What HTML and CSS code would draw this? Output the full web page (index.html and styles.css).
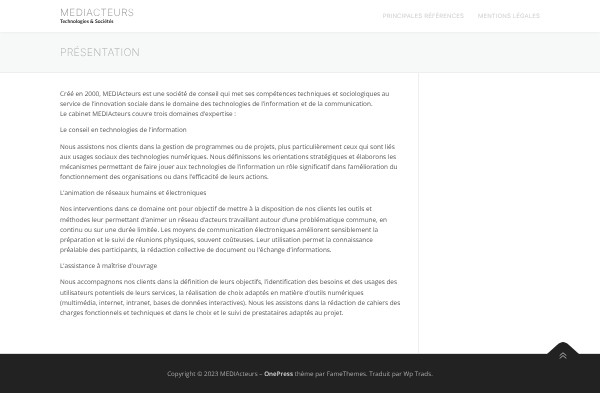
FILE: index.html
```html
<!DOCTYPE html>
<html lang="fr">
<head>
<meta charset="utf-8">
<title>Présentation – MEDIActeurs</title>
<link rel="stylesheet" href="styles.css">
</head>
<body>
<header class="site-header">
  <div class="container header-row">
    <div class="brand">
      <div class="site-title">MEDIACTEURS</div>
      <div class="tagline">Technologies &amp; Sociétés</div>
    </div>
    <nav class="nav">
      <a>PRINCIPALES RÉFÉRENCES</a>
      <a>MENTIONS LÉGALES</a>
    </nav>
  </div>
</header>
<section class="page-band">
  <div class="container"><h1>PRÉSENTATION</h1></div>
</section>
<div class="container content-row">
  <main class="main">
    <p>Créé en 2000, MEDIActeurs est une société de conseil qui met ses compétences techniques et sociologiques au service de l’innovation sociale dans le domaine des technologies de l’information et de la communication.<br>Le cabinet MEDIActeurs couvre trois domaines d’expertise :</p>
    <p>Le conseil en technologies de l’information</p>
    <p>Nous assistons nos clients dans la gestion de programmes ou de projets, plus particulièrement ceux qui sont liés aux usages sociaux des technologies numériques. Nous définissons les orientations stratégiques et élaborons les mécanismes permettant de faire jouer aux technologies de l’information un rôle significatif dans l’amélioration du fonctionnement des organisations ou dans l’efficacité de leurs actions.</p>
    <p>L’animation de réseaux humains et électroniques</p>
    <p>Nos interventions dans ce domaine ont pour objectif de mettre à la disposition de nos clients les outils et méthodes leur permettant d’animer un réseau d’acteurs travaillant autour d’une problématique commune, en continu ou sur une durée limitée. Les moyens de communication électroniques améliorent sensiblement la préparation et le suivi de réunions physiques, souvent coûteuses. Leur utilisation permet la connaissance préalable des participants, la rédaction collective de document ou l’échange d’informations.</p>
    <p>L’assistance à maîtrise d’ouvrage</p>
    <p>Nous accompagnons nos clients dans la définition de leurs objectifs, l’identification des besoins et des usages des utilisateurs potentiels de leurs services, la réalisation de choix adaptés en matière d’outils numériques (multimédia, internet, intranet, bases de données interactives). Nous les assistons dans la rédaction de cahiers des charges fonctionnels et techniques et dans le choix et le suivi de prestataires adaptés au projet.</p>
  </main>
  <aside class="side"></aside>
</div>
<footer class="footer">
  <a class="to-top" aria-label="Haut de page">
    <svg viewBox="0 0 32 12" width="32" height="12"><path d="M0 12 L10 3 C12.5 .8 14.5 0 16 0 C17.5 0 19.5 .8 22 3 L32 12Z" fill="#222"/></svg>
    <svg class="chev" viewBox="0 0 8 7" width="8" height="7"><path d="M.7 3.6 L4 .8 L7.3 3.6 M.7 6.4 L4 3.6 L7.3 6.4" fill="none" stroke="#bbb" stroke-width=".9"/></svg>
  </a>
  <p class="copyright">Copyright © 2023 MEDIActeurs – <b>OnePress</b> thème par FameThemes. Traduit par Wp Trads.</p>
</footer>
</body>
</html>
```
FILE: styles.css
```css
* { box-sizing: border-box; }
html, body { margin: 0; padding: 0; background: #fff; }
body { font-family: "Open Sans", sans-serif; font-size: 6.4px; line-height: 10.15px; color: #555; height: 400px; overflow: hidden; text-rendering: geometricPrecision; will-change: transform; }
.container { width: 480px; margin: 0 auto; }
.site-header { height: 32px; background: #fff; box-shadow: 0 0 3px rgba(0,0,0,.08); position: relative; }
.header-row { display: flex; justify-content: space-between; height: 32px; }
.brand { padding-top: 8px; }
.site-title { font-family: "Inter", sans-serif; font-weight: 200; font-size: 10px; line-height: 11px; letter-spacing: .4px; color: #888; }
.tagline { font-family: "Lato", sans-serif; font-weight: 700; font-size: 5px; line-height: 6px; color: #222; }
.nav { display: flex; gap: 14px; padding-top: 11.5px; }
.nav a { font-family: "Inter", "Open Sans", sans-serif; font-size: 6px; line-height: 10px; letter-spacing: .13px; color: #cfcfcf; }
.page-band { height: 40.5px; background: #f7f8f8; border-bottom: 1px solid #eee; }
.page-band h1 { margin: 0; padding-top: 13.5px; font-family: "Inter", sans-serif; font-weight: 200; font-size: 10.5px; line-height: 13px; letter-spacing: .25px; color: #aaa; }
.content-row { display: flex; height: 280.5px; }
.main { width: 358.5px; padding: 16.5px 16px 0 0; border-right: 1px solid #eee; }
.main p { margin: 0 0 6px; }
.side { flex: 1; }
.footer { position: relative; height: 40px; background: #222; border-top: 1px solid #ddd; }
.to-top { position: absolute; right: 21px; top: -12px; width: 32px; height: 20px; display: flex; flex-direction: column; align-items: center; }
.to-top svg { display: block; flex: none; }
.to-top .chev { margin-top: -2.5px; }
.copyright { margin: 0; padding-top: 14.5px; text-align: center; font-size: 6.2px; line-height: 10px; letter-spacing: .05px; color: #aaa; }
.copyright b { color: #ddd; font-weight: 600; }
```
